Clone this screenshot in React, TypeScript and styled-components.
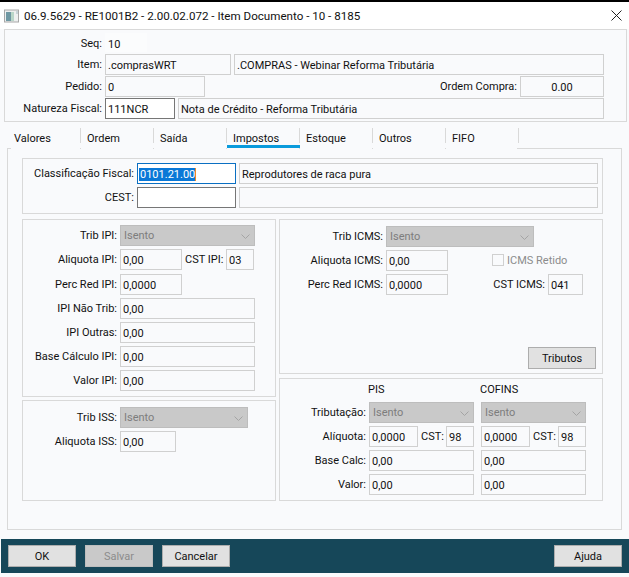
import React from "react";
import styled, { createGlobalStyle } from "styled-components";

const Global = createGlobalStyle`
  html, body { margin: 0; padding: 0; background: #f9fafc; }
  * { box-sizing: border-box; }
`;

const Page = styled.div`
  width: 629px;
  height: 577px;
  display: flex;
  flex-direction: column;
  background: #f9fafc;
  border-top: 2px solid #000;
  font-family: Roboto, "Noto Sans", sans-serif;
  font-size: 11px;
  color: #111;
  overflow: hidden;
`;

const TitleBar = styled.div`
  height: 27px;
  flex: none;
  background: #fff;
  display: flex;
  align-items: center;
  padding: 0 7px 0 4px;
  font-size: 11.6px;
  gap: 5px;
`;
const TitleText = styled.span`
  flex: 1;
  color: #111;
`;

const Header = styled.div`
  height: 93px;
  flex: none;
  margin-left: 4px;
  margin-right: 2px;
  border: 1px solid #d9d9d9;
  padding: 3px 22px 0 0;
  display: flex;
  flex-direction: column;
  gap: 1px;
`;

const Row = styled.div<{ $h?: number; $gap?: number }>`
  display: flex;
  align-items: flex-start;
  flex: none;
  gap: ${(p) => p.$gap ?? 3}px;
  height: ${(p) => p.$h ?? 21}px;
`;

const Label = styled.span<{ $w?: number; $off?: boolean }>`
  flex: none;
  width: ${(p) => (p.$w ? `${p.$w}px` : "auto")};
  text-align: right;
  line-height: 21px;
  white-space: nowrap;
  color: ${(p) => (p.$off ? "#8c8c8c" : "#111")};
`;

const Field = styled.div<{
  $w?: number;
  $h?: number;
  $tone?: "plain" | "bare" | "dark" | "focus";
}>`
  flex: ${(p) => (p.$w ? "none" : "1")};
  width: ${(p) => (p.$w ? `${p.$w}px` : "auto")};
  height: ${(p) => p.$h ?? 21}px;
  line-height: 21px;
  padding: 0 2px;
  white-space: nowrap;
  overflow: hidden;
  background: ${(p) =>
    p.$tone === "dark" || p.$tone === "focus"
      ? "#fff"
      : p.$tone === "bare"
        ? "#fbfcfd"
        : "#f9fafc"};
  border: 1px solid
    ${(p) =>
      p.$tone === "dark"
        ? "#767676"
        : p.$tone === "focus"
          ? "#0a6fc2"
          : p.$tone === "bare"
            ? "transparent"
            : "#d0d0d0"};
`;

const RightValue = styled(Field)`
  text-align: center;
`;

const Selected = styled.span`
  background: #0a78d7;
  color: #fff;
  margin-left: -1px;
  border-right: 1px solid #f08a24;
  padding-left: 1px;
`;

const SelectBox = styled.div<{ $w?: number }>`
  flex: ${(p) => (p.$w ? "none" : "1")};
  width: ${(p) => (p.$w ? `${p.$w}px` : "auto")};
  height: 21px;
  background: #c9c9c9;
  border: 1px solid #bdbdbd;
  color: #7d7d7d;
  padding: 1px 4px 0 3px;
  line-height: 20px;
  display: flex;
  align-items: center;
  justify-content: space-between;
`;

const Push = styled.div`
  margin-left: auto;
  display: flex;
  gap: 3px;
`;

const Tabs = styled.div`
  flex: none;
  height: 26px;
  margin-left: 8px;
  padding-top: 6px;
  display: flex;
`;

const Tab = styled.div<{ $active?: boolean }>`
  position: relative;
  width: 73px;
  height: 20px;
  padding-left: 6px;
  line-height: 21px;
  box-shadow: ${(p) => (p.$active ? "inset 0 -3px 0 #0a9bdc" : "none")};

  &::after {
    content: "";
    position: absolute;
    top: 0;
    right: 0;
    width: 1px;
    height: 15px;
    background: #d9d9d9;
  }

  &::before {
    content: "";
    position: absolute;
    bottom: -1px;
    right: 0;
    width: 1px;
    height: 1px;
    background: #d9d9d9;
  }
`;

const TabBody = styled.div`
  flex: none;
  height: 382px;
  margin-left: 7px;
  width: 615px;
  border: 1px solid #d9d9d9;
  border-top: none;
  padding: 10px 18px 0 14px;
  display: flex;
  flex-direction: column;
  gap: 5px;
  position: relative;

  &::before {
    content: "";
    position: absolute;
    top: 0;
    left: 0;
    width: 3px;
    height: 1px;
    background: #d9d9d9;
  }
`;

const TabTopLine = styled.div`
  position: absolute;
  top: 0;
  right: 0;
  width: 104px;
  height: 1px;
  background: #d9d9d9;
`;

const Panel = styled.div<{ $h: number; $pt?: number; $pl?: number; $pr?: number }>`
  flex: none;
  height: ${(p) => p.$h}px;
  border: 1px solid #d9d9d9;
  padding: ${(p) => p.$pt ?? 5}px ${(p) => p.$pr ?? 6}px 4px ${(p) => p.$pl ?? 2}px;
  display: flex;
  flex-direction: column;
  gap: 3px;
`;

const Columns = styled.div`
  display: flex;
  gap: 3px;
`;

const Column = styled.div<{ $w: number; $gap: number }>`
  width: ${(p) => p.$w}px;
  display: flex;
  flex-direction: column;
  gap: ${(p) => p.$gap}px;
`;

const Pair = styled.div`
  display: grid;
  grid-template-columns: 105px 105px;
  column-gap: 7px;
  height: 100%;
`;

const Heading = styled.span<{ $shift: number }>`
  margin-left: ${(p) => p.$shift}px;
  line-height: 22px;
`;

const TaxCell = styled.div`
  display: flex;
  gap: 3px;
`;

const Check = styled.div`
  flex: none;
  width: 12px;
  height: 12px;
  margin: 4px 0 0 41px;
  border: 1px solid #d0d0d0;
  background: #f9fafc;
`;

const Button = styled.button<{ $off?: boolean }>`
  flex: none;
  width: 68px;
  height: 22px;
  padding: 0;
  font: inherit;
  color: ${(p) => (p.$off ? "#8c8c8c" : "#111")};
  background: ${(p) => (p.$off ? "#c9c9c9" : "#e1e1e1")};
  border: 1px solid ${(p) => (p.$off ? "#bdbdbd" : "#adadad")};
  border-radius: 0;
`;

const TributosRow = styled.div`
  margin-top: auto;
  display: flex;
  justify-content: flex-end;
`;

const Footer = styled.div`
  flex: none;
  height: 34px;
  margin-top: 9px;
  margin-left: 1px;
  background: #164759;
  padding: 6px 7px 0 7px;
  display: flex;
  gap: 9px;
`;

const FooterEnd = styled.div`
  margin-left: auto;
`;

const WindowIcon = () => (
  <svg width="15" height="14" viewBox="0 0 15 14">
    <rect x="0.5" y="1" width="14" height="12" fill="#eef0f0" stroke="#a8a8a8" />
    <rect x="2" y="3" width="5" height="9" fill="#6f98a3" />
    <rect x="7" y="3" width="3" height="9" fill="#b9d6c8" />
    <rect x="12" y="2" width="2" height="3" fill="#c8d4d8" />
  </svg>
);

const CloseIcon = () => (
  <svg width="11" height="11" viewBox="0 0 11 11">
    <path d="M0.5 0.5 L10.5 10.5 M10.5 0.5 L0.5 10.5" stroke="#222" fill="none" />
  </svg>
);

const Chevron = () => (
  <svg width="9" height="5" viewBox="0 0 9 5">
    <path d="M0.5 0.5 L4.5 4.5 L8.5 0.5" stroke="#a4a4a4" fill="none" />
  </svg>
);

const Select = ({ w, children }: { w?: number; children: React.ReactNode }) => (
  <SelectBox $w={w}>
    {children}
    <Chevron />
  </SelectBox>
);

const tabs = ["Valores", "Ordem", "Saída", "Impostos", "Estoque", "Outros", "FIFO"];

export default function App() {
  return (
    <Page>
      <Global />
      <TitleBar>
        <WindowIcon />
        <TitleText>06.9.5629 - RE1001B2 - 2.00.02.072 - Item Documento - 10 - 8185</TitleText>
        <CloseIcon />
      </TitleBar>

      <Header>
        <Row $h={20}>
          <Label $w={97}>Seq:</Label>
          <Field $w={42} $h={19} $tone="bare">10</Field>
        </Row>
        <Row>
          <Label $w={97}>Item:</Label>
          <Field $w={126}>.comprasWRT</Field>
          <Field>.COMPRAS - Webinar Reforma Tributária</Field>
        </Row>
        <Row>
          <Label $w={97}>Pedido:</Label>
          <Field $w={100}>0</Field>
          <Push>
            <Label>Ordem Compra:</Label>
            <RightValue $w={84}>0.00</RightValue>
          </Push>
        </Row>
        <Row>
          <Label $w={97}>Natureza Fiscal:</Label>
          <Field $w={70} $tone="dark">111NCR</Field>
          <Field>Nota de Crédito - Reforma Tributária</Field>
        </Row>
      </Header>

      <Tabs>
        {tabs.map((t) => (
          <Tab key={t} $active={t === "Impostos"}>{t}</Tab>
        ))}
      </Tabs>

      <TabBody>
        <TabTopLine />
        <Panel $h={56} $pt={4} $pl={1} $pr={4}>
          <Row>
            <Label $w={110}>Classificação Fiscal:</Label>
            <Field $w={99} $tone="focus"><Selected>0101.21.00</Selected></Field>
            <Field>Reprodutores de raca pura</Field>
          </Row>
          <Row>
            <Label $w={110}>CEST:</Label>
            <Field $w={99} $tone="dark" />
            <Field />
          </Row>
        </Panel>

        <Columns>
          <Column $w={254} $gap={3}>
            <Panel $h={178}>
              <Row>
                <Label $w={92}>Trib IPI:</Label>
                <Select w={135}>Isento</Select>
              </Row>
              <Row $h={22}>
                <Label $w={92}>Aliquota IPI:</Label>
                <Field $w={62}>0,00</Field>
                <Label $w={38}>CST IPI:</Label>
                <Field $w={28}>03</Field>
              </Row>
              <Row>
                <Label $w={92}>Perc Red IPI:</Label>
                <Field $w={62}>0,0000</Field>
              </Row>
              <Row>
                <Label $w={92}>IPI Não Trib:</Label>
                <Field $w={135}>0,00</Field>
              </Row>
              <Row>
                <Label $w={92}>IPI Outras:</Label>
                <Field $w={135}>0,00</Field>
              </Row>
              <Row>
                <Label $w={92}>Base Cálculo IPI:</Label>
                <Field $w={135}>0,00</Field>
              </Row>
              <Row>
                <Label $w={92}>Valor IPI:</Label>
                <Field $w={135}>0,00</Field>
              </Row>
            </Panel>
            <Panel $h={101} $pt={6}>
              <Row>
                <Label $w={92}>Trib ISS:</Label>
                <Select w={128}>Isento</Select>
              </Row>
              <Row>
                <Label $w={92}>Aliquota ISS:</Label>
                <Field $w={56}>0,00</Field>
              </Row>
            </Panel>
          </Column>

          <Column $w={324} $gap={4}>
            <Panel $h={155} $pt={6}>
              <Row>
                <Label $w={101}>Trib ICMS:</Label>
                <Select w={148}>Isento</Select>
              </Row>
              <Row>
                <Label $w={101}>Aliquota ICMS:</Label>
                <Field $w={62}>0,00</Field>
                <Check />
                <Label $off>ICMS Retido</Label>
              </Row>
              <Row>
                <Label $w={101}>Perc Red ICMS:</Label>
                <Field $w={62}>0,0000</Field>
                <Label $w={94}>CST ICMS:</Label>
                <Field $w={35}>041</Field>
              </Row>
              <TributosRow>
                <Button>Tributos</Button>
              </TributosRow>
            </Panel>
            <Panel $h={123} $pt={0}>
              <Row $h={20}>
                <Label $w={84} />
                <Pair>
                  <Heading $shift={-1}>PIS</Heading>
                  <Heading $shift={-1}>COFINS</Heading>
                </Pair>
              </Row>
              <Row>
                <Label $w={84}>Tributação:</Label>
                <Pair>
                  <Select>Isento</Select>
                  <Select>Isento</Select>
                </Pair>
              </Row>
              <Row>
                <Label $w={84}>Alíquota:</Label>
                <Pair>
                  <TaxCell>
                    <Field $w={49}>0,0000</Field>
                    <Label $w={22}>CST:</Label>
                    <Field $w={28}>98</Field>
                  </TaxCell>
                  <TaxCell>
                    <Field $w={49}>0,0000</Field>
                    <Label $w={22}>CST:</Label>
                    <Field $w={28}>98</Field>
                  </TaxCell>
                </Pair>
              </Row>
              <Row>
                <Label $w={84}>Base Calc:</Label>
                <Pair>
                  <Field>0,00</Field>
                  <Field>0,00</Field>
                </Pair>
              </Row>
              <Row>
                <Label $w={84}>Valor:</Label>
                <Pair>
                  <Field>0,00</Field>
                  <Field>0,00</Field>
                </Pair>
              </Row>
            </Panel>
          </Column>
        </Columns>
      </TabBody>

      <Footer>
        <Button>OK</Button>
        <Button $off>Salvar</Button>
        <Button>Cancelar</Button>
        <FooterEnd>
          <Button>Ajuda</Button>
        </FooterEnd>
      </Footer>
    </Page>
  );
}
